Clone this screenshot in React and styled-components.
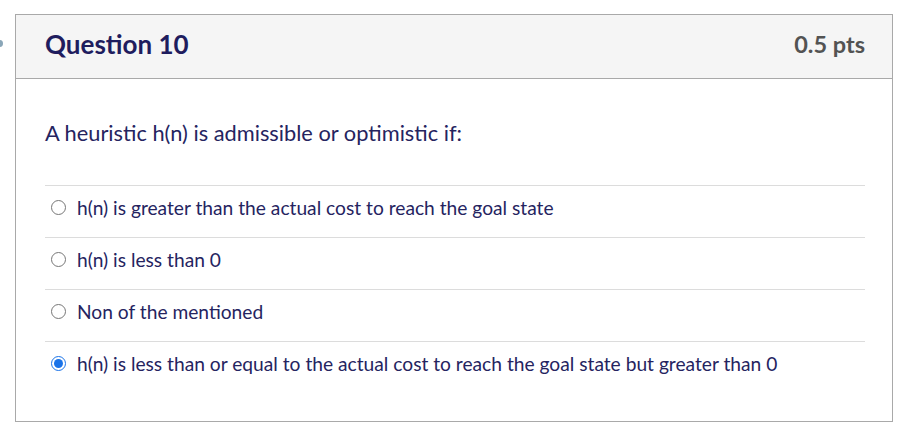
import styled, { createGlobalStyle } from "styled-components";

const GlobalStyle = createGlobalStyle`
    body {
        margin: 0;
        background: #fff;
        font-family: Lato, "Open Sans", sans-serif;
    }
`;

const answers = [
    { text: "h(n) is greater than the actual cost to reach the goal state", checked: false },
    { text: "h(n) is less than 0", checked: false },
    { text: "Non of the mentioned", checked: false },
    { text: "h(n) is less than or equal to the actual cost to reach the goal state but greater than 0", checked: true },
];

const App = () => {
    return (
        <Page>
            <GlobalStyle />
            <Marker />
            <Card>
                <Header>
                    <Title>Question 10</Title>
                    <Points>0.5 pts</Points>
                </Header>
                <Body>
                    <Prompt>A heuristic h(n) is admissible or optimistic if:</Prompt>
                    <Answers>
                        {answers.map((a, i) => (
                            <Answer key={i}>
                                <Radio type="radio" name="q10" defaultChecked={a.checked} />
                                <span>{a.text}</span>
                            </Answer>
                        ))}
                    </Answers>
                </Body>
            </Card>
        </Page>
    );
};

export default App;

const Page = styled.div`
    position: relative;
    padding: 14px 18px 17px 15px;
`;

const Marker = styled.div`
    position: absolute;
    left: -4px;
    top: 40px;
    width: 7px;
    height: 7px;
    border-radius: 50%;
    background: #8aa6b8;
`;

const Card = styled.div`
    border: 1px solid #a9a9a9;
    width: 876px;
`;

const Header = styled.div`
    display: flex;
    align-items: center;
    justify-content: space-between;
    height: 57px;
    padding: 0 27px 6px 29px;
    background: #f5f5f5;
    border-bottom: 1px solid #a9a9a9;
`;

const Title = styled.h2`
    margin: 0;
    font-size: 26px;
    font-weight: 700;
    color: #1f1d5e;
`;

const Points = styled.div`
    font-size: 23.5px;
    font-weight: 700;
    color: #535353;
`;

const Body = styled.div`
    padding: 39px 27px 28px 29px;
`;

const Prompt = styled.p`
    margin: 0 0 37px 0;
    font-size: 21.8px;
    line-height: 30px;
    color: #25245f;
`;

const Answers = styled.div`
    display: flex;
    flex-direction: column;
`;

const Answer = styled.label`
    display: flex;
    align-items: center;
    gap: 11px;
    height: 42px;
    padding-bottom: 9px;
    border-top: 1px solid #dcdcdc;
    font-size: 19.2px;
    color: #25245f;
`;

const Radio = styled.input`
    margin: 0 0 0 6px;
    width: 15px;
    height: 15px;
    accent-color: #1a73e8;
`;
